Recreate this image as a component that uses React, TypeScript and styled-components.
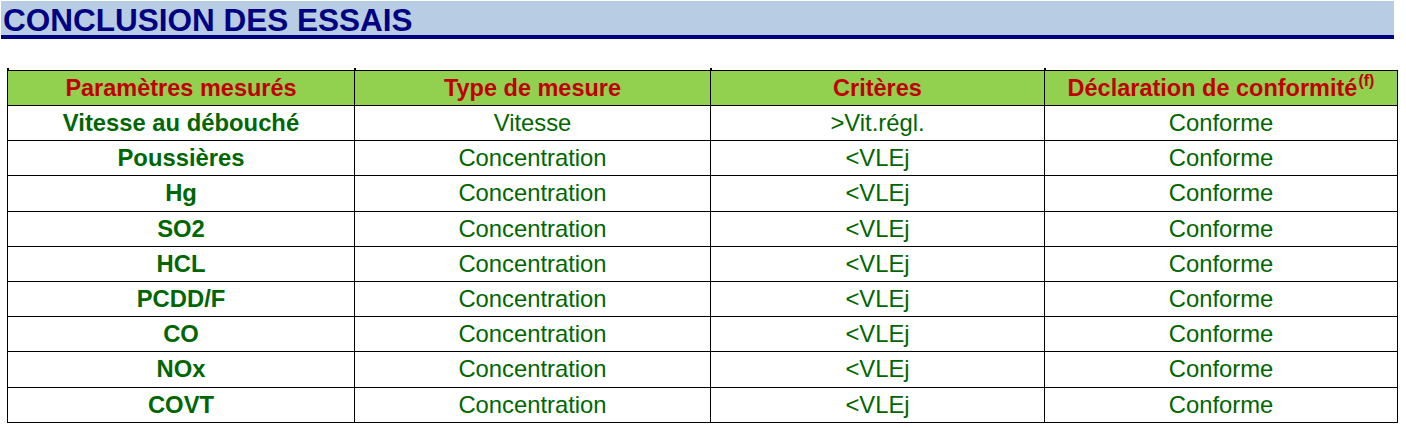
import React from "react";
import styled, { createGlobalStyle } from "styled-components";

const Global = createGlobalStyle`
  html, body { margin: 0; padding: 0; background: #ffffff; }
  body { font-family: "Liberation Sans", Arial, sans-serif; }
`;

const Page = styled.div`
  width: 1406px;
  height: 428px;
  padding: 1px 0 0 1px;
  box-sizing: border-box;
  display: flex;
  flex-direction: column;
`;

const TitleBand = styled.div`
  width: 1393px;
  height: 30px;
  padding-top: 4px;
  background: #b8cce4;
  border-bottom: 4px solid #000080;
  display: flex;
  align-items: flex-start;
  box-sizing: content-box;
`;

const Title = styled.h1`
  margin: 0 0 0 2px;
  font-family: "Liberation Sans", Arial, sans-serif;
  font-weight: bold;
  font-size: 31.5px;
  line-height: 1;
  color: #000080;
  white-space: nowrap;
`;

const Table = styled.table`
  margin: 31px 0 0 6px;
  border-collapse: collapse;
  table-layout: fixed;
  width: 1390px;
`;

const HeadCell = styled.th`
  position: relative;
  height: 34px;
  padding: 0;
  background: #92d050;
  border: 1.5px solid #000;
  color: #c00000;
  font-weight: bold;
  font-size: 23.5px;
  text-align: center;
  vertical-align: middle;
  line-height: 32px;
  white-space: nowrap;
  &::before {
    content: "";
    position: absolute;
    left: -1px;
    top: -3px;
    width: 1.5px;
    height: 3px;
    background: #000;
  }
`;

const Sup = styled.sup`
  font-size: 16px;
  line-height: 0;
  vertical-align: 10px;
  margin-left: 1px;
`;

const Cell = styled.td<{ $bold?: boolean }>`
  height: 34.2px;
  padding: 0;
  border: 1.5px solid #000;
  color: #006600;
  font-weight: ${(p) => (p.$bold ? "bold" : "normal")};
  font-size: 23.8px;
  text-align: center;
  vertical-align: top;
  line-height: 34.2px;
  white-space: nowrap;
`;

const rows: [string, string, string, string][] = [
  ["Vitesse au débouché", "Vitesse", ">Vit.régl.", "Conforme"],
  ["Poussières", "Concentration", "<VLEj", "Conforme"],
  ["Hg", "Concentration", "<VLEj", "Conforme"],
  ["SO2", "Concentration", "<VLEj", "Conforme"],
  ["HCL", "Concentration", "<VLEj", "Conforme"],
  ["PCDD/F", "Concentration", "<VLEj", "Conforme"],
  ["CO", "Concentration", "<VLEj", "Conforme"],
  ["NOx", "Concentration", "<VLEj", "Conforme"],
  ["COVT", "Concentration", "<VLEj", "Conforme"],
];

export default function App() {
  return (
    <>
      <Global />
      <Page>
        <TitleBand>
          <Title>CONCLUSION DES ESSAIS</Title>
        </TitleBand>
        <Table>
          <colgroup>
            <col style={{ width: 347 }} />
            <col style={{ width: 356 }} />
            <col style={{ width: 334 }} />
            <col style={{ width: 353 }} />
          </colgroup>
          <thead>
            <tr>
              <HeadCell>Paramètres mesurés</HeadCell>
              <HeadCell>Type de mesure</HeadCell>
              <HeadCell>Critères</HeadCell>
              <HeadCell>
                Déclaration de conformité<Sup>(f)</Sup>
              </HeadCell>
            </tr>
          </thead>
          <tbody>
            {rows.map((r) => (
              <tr key={r[0]}>
                <Cell $bold>{r[0]}</Cell>
                <Cell>{r[1]}</Cell>
                <Cell>{r[2]}</Cell>
                <Cell>{r[3]}</Cell>
              </tr>
            ))}
          </tbody>
        </Table>
      </Page>
    </>
  );
}
